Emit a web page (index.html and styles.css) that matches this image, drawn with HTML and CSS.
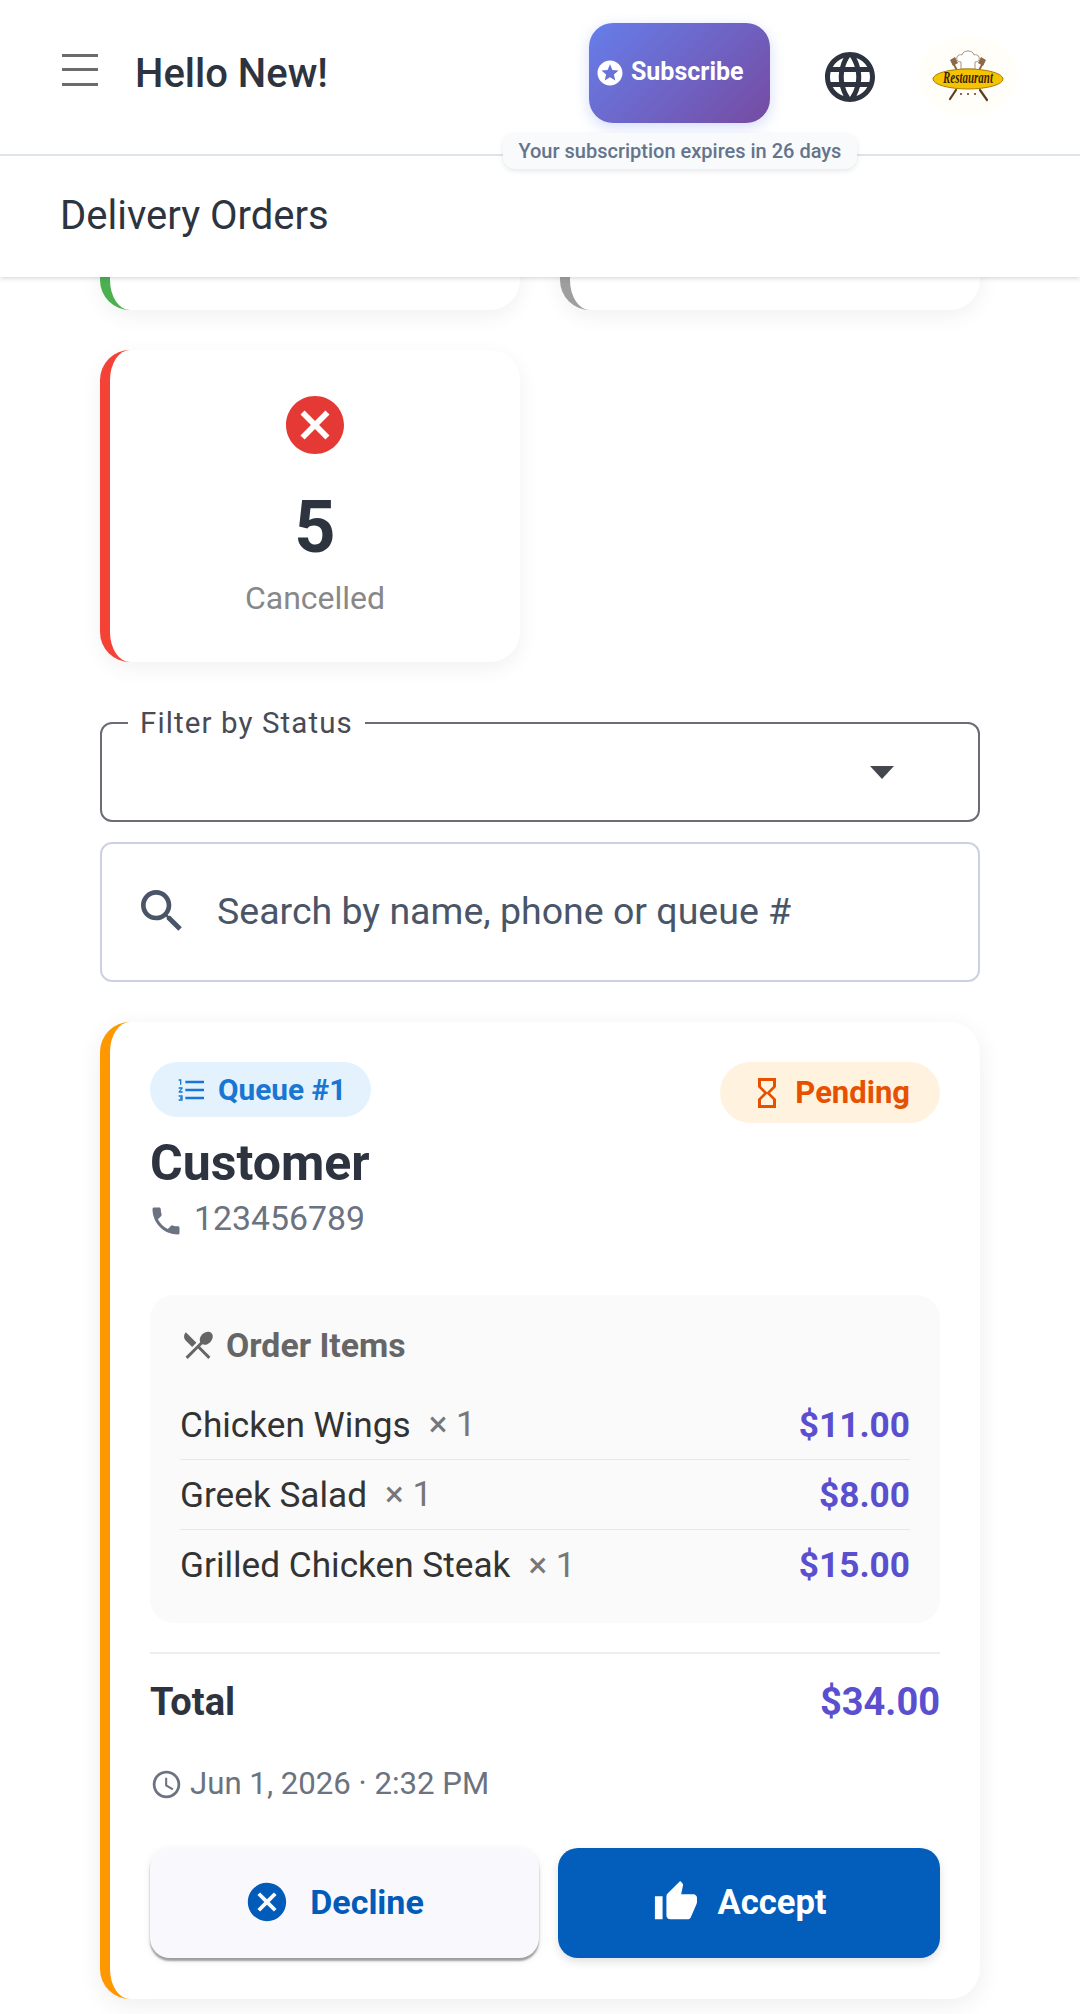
FILE: index.html
```html
<!DOCTYPE html>
<html>
<head>
    <meta charset="utf-8" />
    <title>Delivery Orders</title>
    <link rel="stylesheet" href="styles.css">
</head>
<body>
    <header class="header">
        <div class="topbar">
            <div class="menu-btn"><span></span><span></span><span></span></div>
            <div class="hello">Hello New!</div>
            <div class="sub-wrap">
                <div class="subscribe">
                    <svg class="sub-icon" viewBox="0 0 24 24"><path d="M11.99 2C6.47 2 2 6.48 2 12s4.47 10 9.99 10C17.52 22 22 17.52 22 12S17.52 2 11.99 2zm4.24 16L12 15.45 7.77 18l1.12-4.81-3.73-3.23 4.92-.42L12 5l1.92 4.53 4.92.42-3.73 3.23L16.23 18z"/></svg>
                    Subscribe
                </div>
                <div class="sub-note">Your subscription expires in 26 days</div>
            </div>
            <svg class="globe" viewBox="0 0 24 24"><path d="M11.99 2C6.47 2 2 6.48 2 12s4.47 10 9.99 10C17.52 22 22 17.52 22 12S17.52 2 11.99 2zm6.93 6h-2.95c-.32-1.25-.78-2.45-1.38-3.56 1.84.63 3.37 1.91 4.33 3.56zM12 4.04c.83 1.2 1.48 2.53 1.91 3.96h-3.82c.43-1.43 1.08-2.76 1.91-3.96zM4.26 14C4.1 13.36 4 12.69 4 12s.1-1.36.26-2h3.38c-.08.66-.14 1.32-.14 2 0 .68.06 1.34.14 2H4.26zm.82 2h2.95c.32 1.25.78 2.45 1.38 3.56-1.84-.63-3.37-1.9-4.33-3.56zm2.95-8H5.08c.96-1.66 2.49-2.93 4.33-3.56C8.81 5.55 8.35 6.75 8.03 8zM12 19.96c-.83-1.2-1.48-2.53-1.91-3.96h3.82c-.43 1.43-1.08 2.76-1.91 3.96zM14.34 14H9.66c-.09-.66-.16-1.32-.16-2 0-.68.07-1.35.16-2h4.68c.09.65.16 1.32.16 2 0 .68-.07 1.34-.16 2zm.25 5.56c.6-1.11 1.06-2.31 1.38-3.56h2.95c-.96 1.65-2.49 2.93-4.33 3.56zM16.36 14c.08-.66.14-1.32.14-2 0-.68-.06-1.34-.14-2h3.38c.16.64.26 1.31.26 2s-.1 1.36-.26 2h-3.38z"/></svg>
            <svg class="logo" viewBox="0 0 100 80">
                <ellipse cx="50" cy="40" rx="50" ry="40" fill="#fffef9"/>
                <path d="M35 27L40 36M65 27L60 36" stroke="#8a6a4a" stroke-width="2"/>
                <path d="M32 24l5-3 3 6-5 3zM68 24l-5-3-3 6 5 3z" fill="#8a6a4a"/>
                <path d="M43 33v-7c-3 0-5-2-4-5 1-2 3-3 5-2 1-3 3-4 6-4s5 1 6 4c2-1 4 0 5 2 1 3-1 5-4 5v7z" fill="#fff" stroke="#a8957e" stroke-width="1"/>
                <path d="M38 54L32 63M62 54L69 64" stroke="#5f3d20" stroke-width="2.2" stroke-linecap="round"/>
                <ellipse cx="50" cy="43" rx="35" ry="10" fill="#f5c400" stroke="#b07a00" stroke-width="1"/>
                <text class="logo-text" x="25" y="47" textLength="50" lengthAdjust="spacingAndGlyphs">Restaurant</text>
                <circle cx="43" cy="58" r="1" fill="#5f3d20"/><circle cx="50" cy="58" r="1" fill="#5f3d20"/><circle cx="57" cy="58" r="1" fill="#5f3d20"/>
            </svg>
        </div>
        <div class="page-title">Delivery Orders</div>
    </header>

    <main class="content">
        <div class="stats">
            <div class="stat stat-green"></div>
            <div class="stat stat-grey"></div>
            <div class="stat stat-red">
                <svg class="stat-icon" viewBox="2 2 20 20"><path d="M12 2C6.47 2 2 6.47 2 12s4.47 10 10 10 10-4.47 10-10S17.53 2 12 2zm5 13.59L15.59 17 12 13.41 8.41 17 7 15.59 10.59 12 7 8.41 8.41 7 12 10.59 15.59 7 17 8.41 13.41 12 17 15.59z"/></svg>
                <div class="stat-num">5</div>
                <div class="stat-label">Cancelled</div>
            </div>
        </div>

        <fieldset class="filter">
            <legend>Filter by Status</legend>
            <span class="arrow"></span>
        </fieldset>

        <div class="search">
            <svg class="search-icon" viewBox="0 0 24 24"><path d="M15.5 14h-.79l-.28-.27C15.41 12.59 16 11.11 16 9.5 16 5.91 13.09 3 9.5 3S3 5.91 3 9.5 5.91 16 9.5 16c1.61 0 3.09-.59 4.23-1.57l.27.28v.79l5 4.99L20.49 19l-4.99-5zm-6 0C7.01 14 5 11.99 5 9.5S7.01 5 9.5 5 14 7.01 14 9.5 11.99 14 9.5 14z"/></svg>
            <span>Search by name, phone or queue #</span>
        </div>

        <div class="order">
            <div class="order-head">
                <div>
                    <div class="queue">
                        <svg viewBox="2 3 20 18"><path d="M2 17h2v.5H3v1h1v.5H2v1h3v-4H2v1zm1-9h1V4H2v1h1v3zm-1 3h1.8L2 13.1v.9h3v-1H3.2L5 10.9V10H2v1zm5-6v2h14V5H7zm0 14h14v-2H7v2zm0-6h14v-2H7v2z"/></svg>
                        Queue #1
                    </div>
                    <div class="customer">Customer</div>
                    <div class="phone">
                        <svg viewBox="0 0 24 24"><path d="M6.62 10.79c1.44 2.83 3.76 5.14 6.59 6.59l2.2-2.2c.27-.27.67-.36 1.02-.24 1.12.37 2.33.57 3.57.57.55 0 1 .45 1 1V20c0 .55-.45 1-1 1-9.39 0-17-7.61-17-17 0-.55.45-1 1-1h3.5c.55 0 1 .45 1 1 0 1.25.2 2.45.57 3.57.11.35.03.74-.25 1.02l-2.2 2.2z"/></svg>
                        123456789
                    </div>
                </div>
                <div class="status">
                    <svg viewBox="0 0 24 24"><path d="M6 2v6h.01L6 8.01 10 12l-4 4 .01.01H6V22h12v-5.99h-.01L18 16l-4-4 4-3.99-.01-.01H18V2H6zm10 14.5V20H8v-3.5l4-4 4 4zm-4-5l-4-4V4h8v3.5l-4 4z"/></svg>
                    Pending
                </div>
            </div>

            <div class="items">
                <div class="items-title">
                    <svg viewBox="0 0 24 24"><path d="M8.1 13.34l2.83-2.83L3.91 3.5c-1.56 1.56-1.56 4.09 0 5.66l4.19 4.18zm6.78-1.81c1.53.71 3.68.21 5.27-1.38 1.91-1.91 2.28-4.65.81-6.12-1.46-1.46-4.2-1.1-6.12.81-1.59 1.59-2.09 3.74-1.38 5.27L3.7 19.87l1.41 1.41L12 14.41l6.88 6.88 1.41-1.41L13.41 13l1.47-1.47z"/></svg>
                    Order Items
                </div>
                <div class="item">
                    <span class="item-name">Chicken Wings</span><span class="item-qty">× 1</span>
                    <span class="price">$11.00</span>
                </div>
                <div class="item">
                    <span class="item-name">Greek Salad</span><span class="item-qty">× 1</span>
                    <span class="price">$8.00</span>
                </div>
                <div class="item">
                    <span class="item-name">Grilled Chicken Steak</span><span class="item-qty">× 1</span>
                    <span class="price">$15.00</span>
                </div>
            </div>

            <div class="total">
                <span>Total</span>
                <span class="total-price">$34.00</span>
            </div>

            <div class="date">
                <svg viewBox="0 0 24 24"><path d="M11.99 2C6.47 2 2 6.48 2 12s4.47 10 9.99 10C17.52 22 22 17.52 22 12S17.52 2 11.99 2zM12 20c-4.42 0-8-3.58-8-8s3.58-8 8-8 8 3.58 8 8-3.58 8-8 8zm.5-13H11v6l5.25 3.15.75-1.23-4.5-2.67z"/></svg>
                Jun 1, 2026 · 2:32 PM
            </div>

            <div class="actions">
                <div class="btn btn-decline">
                    <svg viewBox="0 0 24 24"><path d="M12 2C6.47 2 2 6.47 2 12s4.47 10 10 10 10-4.47 10-10S17.53 2 12 2zm5 13.59L15.59 17 12 13.41 8.41 17 7 15.59 10.59 12 7 8.41 8.41 7 12 10.59 15.59 7 17 8.41 13.41 12 17 15.59z"/></svg>
                    Decline
                </div>
                <div class="btn btn-accept">
                    <svg viewBox="0 0 24 24"><path d="M1 21h4V9H1v12zm22-11c0-1.1-.9-2-2-2h-6.31l.95-4.57.03-.32c0-.41-.17-.79-.44-1.06L14.17 1 7.59 7.59C7.22 7.95 7 8.45 7 9v10c0 1.1.9 2 2 2h9c.83 0 1.54-.5 1.8-1.22l3.02-7.05c.08-.23.12-.47.12-.73v-2z"/></svg>
                    Accept
                </div>
            </div>
        </div>
    </main>
</body>
</html>
```

FILE: styles.css
```css
* {
    box-sizing: border-box;
}

html, body {
    margin: 0;
    height: 2014px;
    overflow: hidden;
}

body {
    font-family: Roboto, "Liberation Sans", sans-serif;
    background-color: #fff;
    color: #2d3440;
}

svg {
    display: block;
    flex: none;
    fill: currentColor;
}

/* header */
.header {
    position: relative;
    z-index: 2;
    height: 277px;
    background-color: #fff;
    box-shadow: 0 1px 5px rgba(45, 55, 72, 0.22);
}

.topbar {
    display: flex;
    align-items: center;
    height: 156px;
    padding-left: 62px;
    border-bottom: 2px solid #dfe4ea;
}

.menu-btn {
    display: flex;
    flex-direction: column;
    justify-content: space-between;
    width: 36px;
    height: 32px;
    margin-top: -15px;
}

.menu-btn span {
    height: 3px;
    background-color: #6b6b6b;
}

.hello {
    margin-left: 37px;
    margin-top: -8px;
    font-size: 40px;
    font-weight: 500;
}

.sub-wrap {
    position: relative;
    margin-left: 261px;
    margin-top: -9px;
}

.subscribe {
    display: flex;
    align-items: center;
    gap: 6px;
    width: 181px;
    height: 100px;
    padding: 0 0 2px 6px;
    border-radius: 24px;
    color: #fff;
    font-size: 25px;
    font-weight: 700;
    background: linear-gradient(135deg, #667eea, #764ba2);
    box-shadow: 0 4px 14px rgba(102, 126, 234, 0.28);
}

.sub-icon {
    width: 30px;
    height: 30px;
    margin-top: 3px;
}

.sub-note {
    position: absolute;
    top: 110px;
    left: -86px;
    width: 354px;
    height: 36px;
    border-radius: 12px;
    background-color: #f8fafc;
    box-shadow: 0 2px 5px rgba(45, 55, 72, 0.12);
    color: #64748b;
    font-size: 20px;
    font-weight: 500;
    line-height: 36px;
    text-align: center;
    white-space: nowrap;
}

.globe {
    width: 60px;
    height: 60px;
    margin-left: 50px;
    margin-top: -1px;
}

.logo {
    width: 100px;
    height: 80px;
    margin-left: 38px;
    margin-top: -3px;
}

.logo-text {
    font-family: "Liberation Serif", serif;
    font-size: 16px;
    font-style: italic;
    font-weight: 700;
    fill: #3a1f00;
}

.page-title {
    padding: 30px 0 0 60px;
    font-size: 40px;
    line-height: 60px;
}

/* page body, scrolled up under the header */
.content {
    margin-top: -279px;
    padding: 0 100px;
}

.stats {
    display: grid;
    grid-template-columns: 420px 420px;
    gap: 40px;
}

.stat {
    height: 312px;
    border-left: 10px solid;
    border-radius: 30px;
    background-color: #fff;
    box-shadow: 0 6px 22px rgba(0, 0, 0, 0.06);
    text-align: center;
}

.stat-green {
    border-color: #4caf50;
}

.stat-grey {
    border-color: #9e9e9e;
}

.stat-red {
    padding-top: 46px;
    border-color: #f44336;
}

.stat-icon {
    width: 58px;
    height: 58px;
    margin: 0 auto;
    color: #e53935;
}

.stat-num {
    margin-top: 32px;
    font-size: 72px;
    font-weight: 700;
    line-height: 84px;
}

.stat-label {
    margin-top: 8px;
    color: #888;
    font-size: 32px;
    line-height: 40px;
}

.filter {
    position: relative;
    height: 116px;
    margin: 44px 0 0;
    padding: 0 0 0 26px;
    border: 2px solid #6c6c78;
    border-radius: 12px;
}

.filter legend {
    padding: 0 12px;
    color: #4a4a55;
    font-size: 29.5px;
    letter-spacing: 1.1px;
    line-height: 34px;
}

.arrow {
    position: absolute;
    top: 26px;
    right: 84px;
    border-top: 13px solid #45474f;
    border-left: 12px solid transparent;
    border-right: 12px solid transparent;
}

.search {
    display: flex;
    align-items: center;
    gap: 27px;
    height: 140px;
    margin-top: 20px;
    padding: 0 0 2px 32px;
    border: 2px solid #cdd2e2;
    border-radius: 12px;
    color: #4a5568;
    font-size: 37.5px;
}

.search-icon {
    width: 56px;
    height: 56px;
}

/* order card */
.order {
    height: 977px;
    margin-top: 40px;
    padding: 40px 40px 0 40px;
    border-left: 10px solid #ff9800;
    border-radius: 30px;
    background-color: #fff;
    box-shadow: 0 6px 26px rgba(0, 0, 0, 0.07);
}

.order-head {
    display: flex;
    justify-content: space-between;
    align-items: flex-start;
}

.queue {
    display: inline-flex;
    align-items: center;
    gap: 12px;
    height: 55px;
    padding: 0 25px 0 28px;
    border-radius: 28px;
    background-color: #e3f2fd;
    color: #1976d2;
    font-size: 29.8px;
    font-weight: 700;
}

.queue svg {
    width: 28px;
    height: 24px;
}

.customer {
    margin-top: 19px;
    font-size: 50px;
    font-weight: 700;
    line-height: 54px;
}

.phone {
    display: flex;
    align-items: center;
    gap: 10px;
    margin-top: 7px;
    color: #6b7280;
    font-size: 33.8px;
    line-height: 44px;
}

.phone svg {
    width: 36px;
    height: 36px;
    margin-left: -2px;
    margin-top: 3px;
}

.status {
    display: flex;
    align-items: center;
    gap: 10px;
    height: 61px;
    padding: 0 30px 0 29px;
    border-radius: 31px;
    background-color: #fff3e0;
    color: #e65100;
    font-size: 31px;
    font-weight: 700;
}

.status svg {
    width: 36px;
    height: 36px;
}

.items {
    height: 328px;
    margin-top: 54px;
    padding: 30px 30px 0 30px;
    border-radius: 24px;
    background-color: #fafafa;
}

.items-title {
    display: flex;
    align-items: center;
    gap: 10px;
    height: 40px;
    margin-bottom: 25px;
    color: #666;
    font-size: 33.8px;
    font-weight: 700;
}

.items-title svg {
    width: 36px;
    height: 36px;
}

.item {
    display: flex;
    align-items: center;
    height: 70px;
    border-bottom: 1px solid #e8e8e8;
    font-size: 35.2px;
}

.item:last-child {
    border-bottom: none;
}

.item-name {
    color: #333;
}

.item-qty {
    margin-left: 18px;
    color: #777;
    font-size: 35px;
}

.price {
    margin-left: auto;
    color: #5a4fcf;
    font-weight: 700;
}

.total {
    display: flex;
    justify-content: space-between;
    align-items: center;
    height: 98px;
    margin-top: 29px;
    border-top: 2px solid #eee;
    font-size: 38px;
    font-weight: 700;
}

.total-price {
    color: #5a4fcf;
    font-size: 38px;
}

.date {
    display: flex;
    align-items: center;
    gap: 7px;
    margin-top: 14px;
    color: #6b7280;
    font-size: 31.2px;
    line-height: 40px;
}

.date svg {
    width: 33px;
    height: 33px;
}

.actions {
    display: flex;
    gap: 19px;
    margin-top: 44px;
}

.btn {
    display: flex;
    justify-content: center;
    align-items: center;
    gap: 20px;
    height: 110px;
    padding: 0 18px 2px 0;
    border-radius: 20px;
    font-size: 34px;
    font-weight: 700;
}

.btn svg {
    width: 46px;
    height: 46px;
}

.btn-decline {
    width: 389px;
    padding-right: 21px;
    background-color: #f9f8fd;
    color: #005cb8;
    box-shadow: 0 3px 2px rgba(0, 0, 0, 0.35), 0 2px 8px rgba(0, 0, 0, 0.08);
}

.btn-accept {
    width: 382px;
    gap: 18px;
    font-size: 34.6px;
    background-color: #025dbb;
    color: #fff;
    box-shadow: 0 4px 10px rgba(0, 0, 0, 0.12);
}
```
